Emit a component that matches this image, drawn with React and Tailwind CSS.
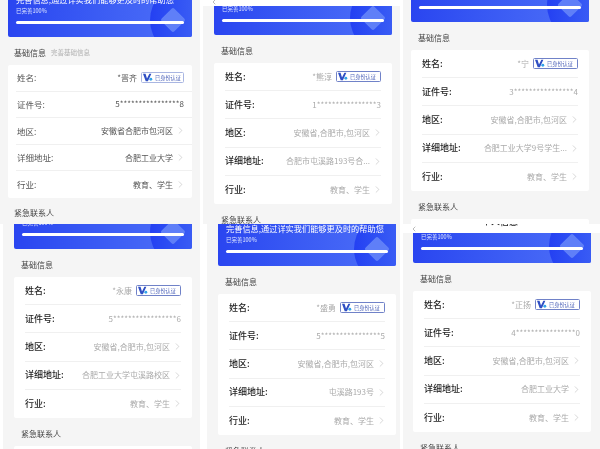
import React from "react";
import { ChevronRight, ChevronLeft } from "lucide-react";

const FONT = "[font-family:'Noto_Sans_CJK_SC','Noto_Sans',sans-serif]";

const tiles = [
  {
    name: "*晋齐", id: "5****************8", region: "安徽省合肥市包河区", address: "合肥工业大学",
    tile: "", inner: "ml-[8px] w-[184px]", card: "h-[37px]", first: true,
  },
  {
    name: "*熊淳", id: "1****************3", region: "安徽省,合肥市,包河区", address: "合肥市屯溪路193号合...",
    tile: "ml-[3px]", inner: "ml-[11px] w-[178px]", card: "h-[29px]", header: "h-[6px]",
  },
  {
    name: "*宁", id: "3****************4", region: "安徽省,合肥市,包河区", address: "合肥工业大学9号学生...",
    tile: "ml-[3px]", inner: "ml-[8px] w-[178px]", card: "h-[22px]",
  },
  {
    name: "*永康", id: "5*****************6", region: "安徽省,合肥市,包河区", address: "合肥工业大学屯溪路校区",
    tile: "ml-[3px]", inner: "ml-[11px] w-[178px]", card: "h-[25px]",
  },
  {
    name: "*盛勇", id: "5****************5", region: "安徽省,合肥市,包河区", address: "屯溪路193号",
    tile: "ml-[7px]", inner: "ml-[11px] w-[178px]", card: "h-[42px]",
  },
  {
    name: "*正扬", id: "4****************0", region: "安徽省,合肥市,包河区", address: "合肥工业大学",
    tile: "ml-[3px]", inner: "ml-[10px] w-[178px]", card: "h-[30px]", header: "h-[9px]",
  },
];

const Badge = ({ first }) => (
  <span
    className={`ml-[2px] flex shrink-0 items-center gap-[2px] overflow-hidden rounded-[1.5px] border bg-white pl-[1px] ${
      first ? "h-[11px] w-[43px] border-[#a9b6e2]" : "h-[11px] w-[45px] border-[#7082c8]"
    }`}
  >
    <svg width="10" height="9" viewBox="0 0 11 8" className="shrink-0">
      <path d="M0 0h2.8l1.6 5L7 0h2.2L5.4 8H3z" fill="#2f4fc4" />
      <circle cx="8.6" cy="6" r="1.6" fill="#35a4e8" />
    </svg>
    <span className="text-[5.2px] leading-none whitespace-nowrap text-[#4158b4]">已身份认证</span>
  </span>
);

const Row = ({ label, value, arrow, badge, first, last }) => (
  <div
    className={`flex items-center justify-between ${
      first ? "ml-[8px] h-[26.6px] pr-[8px] pl-px" : "mx-[11px] h-[28.2px]"
    } ${last ? "" : "border-b border-[#f0f0f0]"}`}
  >
    <span className={first ? "text-[8.5px] text-[#555555]" : "text-[9px] font-medium text-[#222222]"}>{label}</span>
    <span className="flex items-center gap-[2px]">
      <span className={`text-[8px] whitespace-nowrap ${first ? "text-[#555555]" : "text-[#aaaaaa]"}`}>{value}</span>
      {badge && <Badge first={first} />}
      {arrow && <ChevronRight size={11} strokeWidth={1} className="-mr-[2px] text-[#aaaaaa]" />}
    </span>
  </div>
);

const Tile = ({ name, id, region, address, tile, inner, card, header, first }) => (
  <div className={`h-full overflow-hidden bg-[#f5f5f5] ${tile}`}>
    {header && (
      <div className={`relative -ml-[3px] flex items-end justify-center overflow-hidden bg-white pb-[5px] ${header}`}>
        <ChevronLeft size={8} strokeWidth={1} className="absolute bottom-0 left-[10px] text-[#333333]" />
        <span className="shrink-0 text-[9px] leading-[12px] font-medium text-[#222222]">个人信息</span>
      </div>
    )}
    <div className={inner}>
      <div className={`relative flex flex-col justify-end overflow-hidden rounded-b-[2px] bg-gradient-to-r from-[#2a45f0] to-[#4f70f8] px-[8px] pb-[13px] ${card}`}>
        <div className="absolute -right-[30px] -bottom-[19px] h-[72px] w-[72px] rounded-full bg-gradient-to-r from-[#2440f2] to-[#4a6cf6]" />
        <div className="absolute right-[10px] bottom-[8px] h-[18px] w-[18px] rotate-45 rounded-[2px] bg-[#5f7ff8]" />
        <p className="relative shrink-0 text-[8.2px] leading-[12px] whitespace-nowrap text-white">完善信息,通过详实我们能够更及时的帮助您</p>
        <p className="relative mt-[2px] shrink-0 text-[5.5px] leading-[8px] text-[#dfe6ff]">已完善100%</p>
        <div className="relative mt-[6px] h-[3px] shrink-0 rounded-full bg-white" />
      </div>
      <div className={`mt-[10px] mb-[6px] flex h-[12px] items-center gap-[5px] ${first ? "pl-[6px]" : "pl-[7px]"}`}>
        <span className="text-[8px] text-[#444444]">基础信息</span>
        {first && <span className="text-[6.5px] text-[#b0b0b0]">完善基础信息</span>}
      </div>
      <div className="rounded-[2px] bg-white">
        <Row first={first} label="姓名:" value={name} badge />
        <Row first={first} label="证件号:" value={id} />
        <Row first={first} label="地区:" value={region} arrow />
        <Row first={first} label="详细地址:" value={address} arrow />
        <Row first={first} label="行业:" value="教育、学生" arrow last />
      </div>
      <div className={`mb-[6px] flex h-[12px] items-center ${first ? "mt-[9px] pl-[6px]" : "mt-[10px] pl-[7px]"}`}>
        <span className="text-[8px] text-[#444444]">紧急联系人</span>
      </div>
      <div className="h-[20px] rounded-t-[2px] bg-white" />
    </div>
  </div>
);

const App = () => (
  <div className={`grid h-[449px] w-[600px] grid-cols-[200px_200px_200px] grid-rows-[224px_225px] overflow-hidden bg-white blur-[0.3px] ${FONT}`}>
    {tiles.map((t) => (
      <Tile key={t.name} {...t} />
    ))}
  </div>
);

export default App;
